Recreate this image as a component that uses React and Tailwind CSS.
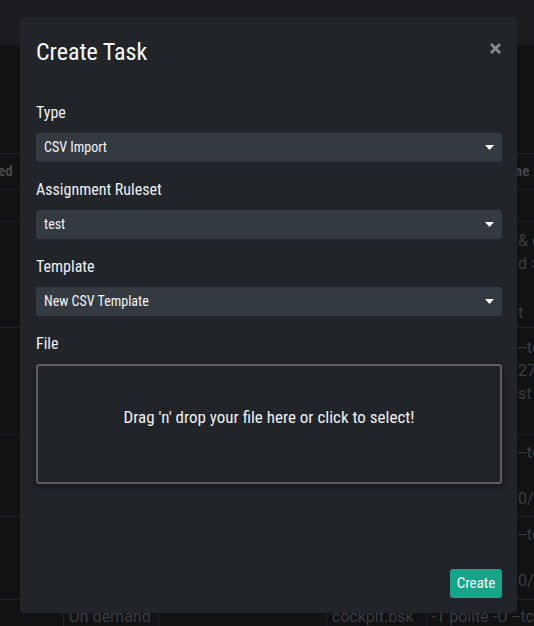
import React from "react";

const Caret = () => (
  <svg width="9" height="5" viewBox="0 0 9 5" className="shrink-0">
    <path d="M0 0 L9 0 L4.5 5 Z" fill="#ffffff" />
  </svg>
);

const CloseX = () => (
  <svg width="11" height="11" viewBox="0 0 11 11">
    <path d="M1 1 L10 10 M10 1 L1 10" stroke="#8b8d91" strokeWidth="2.6" strokeLinecap="butt" />
  </svg>
);

function Select({ value }) {
  return (
    <div className="flex h-[29px] items-center justify-between rounded-[3px] bg-[#343a41] pl-2 pr-[8px] text-[14px] text-[#f1f3f5]">
      <span>{value}</span>
      <Caret />
    </div>
  );
}

function Field({ label, children }) {
  return (
    <div className="flex flex-col">
      <div className="mb-[11px] text-[16px] leading-[18px] text-[#eef0f2]">{label}</div>
      {children}
    </div>
  );
}

function RightText({ children, className = "" }) {
  return (
    <span className={"w-[16px] overflow-hidden whitespace-nowrap " + className}>{children}</span>
  );
}

export default function App() {
  const font = { fontFamily: "'Roboto Condensed', Roboto, 'Liberation Sans', sans-serif", fontStretch: "condensed" };
  const bgFont = { fontFamily: "Roboto, 'Liberation Sans', sans-serif" };
  return (
    <div className="relative h-[626px] w-[534px] overflow-hidden bg-[#111214]">
      {/* background page */}
      <div className="h-[45px] bg-[#1b1d20]" />
      <div className="text-[16px] text-[#3a3c40]" style={bgFont}>
        <div className="h-[108px]" />
        <div className="flex h-[37px] items-center justify-between border-y border-[#1d1f22] text-[15px] font-bold text-[#45474a]" style={font}>
          <span className="-ml-[2px]">ed</span>
          <span className="w-[23px] overflow-hidden whitespace-nowrap">me</span>
        </div>
        <div className="h-[32px] border-b border-[#1d1f22]" />
        <div className="flex h-[106px] flex-col items-end border-b border-[#1d1f22] pt-[7px] leading-[23px]">
          <RightText>&amp; c</RightText>
          <RightText>d &gt;</RightText>
          <RightText className="mt-[26px]">t</RightText>
        </div>
        <div className="flex h-[107px] flex-col items-end border-b border-[#1d1f22] pt-[8px] leading-[23px]">
          <RightText>--tc</RightText>
          <RightText>27</RightText>
          <RightText>st &gt;</RightText>
        </div>
        <div className="flex h-[82px] flex-col items-end border-b border-[#1d1f22] pt-[6px] leading-[23px]">
          <RightText>--tc</RightText>
          <RightText className="mt-[23px]">0/2</RightText>
        </div>
        <div className="flex h-[83px] flex-col items-end border-b border-[#1d1f22] pt-[6px] leading-[23px]">
          <RightText>--tc</RightText>
          <RightText className="mt-[23px]">0/2</RightText>
        </div>
        <div className="flex h-[30px] items-stretch text-[16px]">
          <span className="w-[65px]" />
          <span className="w-[98px] border-l border-[#1d1f22] pl-[5px] pt-[7px] leading-[20px]">On demand</span>
          <span className="w-[174px] border-l border-[#1d1f22]" />
          <span className="w-[103px] border-l border-[#1d1f22] pl-[5px] pt-[7px] leading-[20px]">cockpit.bsk</span>
          <span className="flex-1 whitespace-nowrap border-l border-[#1d1f22] pl-[5px] pt-[7px] leading-[20px]">-T polite -U --tc</span>
        </div>
      </div>

      {/* modal */}
      <div
        className="absolute left-[20px] top-[17px] flex h-[596px] w-[497px] flex-col rounded-[4px] bg-[#212429] pb-[15px] pl-[16px] pr-[15px] pt-[20px]"
        style={font}
      >
        <div className="flex items-start justify-between">
          <h2 className="text-[24px] leading-[30px] text-[#f8f9fa]">Create Task</h2>
          <span className="mr-[1px] mt-[6px]"><CloseX /></span>
        </div>
        <div className="mt-[37px] flex flex-col gap-[19px]">
          <Field label="Type"><Select value="CSV Import" /></Field>
          <Field label="Assignment Ruleset"><Select value="test" /></Field>
          <Field label="Template"><Select value="New CSV Template" /></Field>
          <Field label="File">
            <div className="flex h-[120px] items-center justify-center rounded-[3px] border-2 border-[#5c5e61] pb-[12px] text-[17px] text-[#eef0f2] shadow-[0_2px_6px_rgba(0,0,0,0.5)]">
              Drag 'n' drop your file here or click to select!
            </div>
          </Field>
        </div>
        <div className="mt-auto flex justify-end">
          <button className="h-[29px] w-[52px] rounded-[3px] bg-[#17a58a] text-[15px] text-white">Create</button>
        </div>
      </div>
    </div>
  );
}
